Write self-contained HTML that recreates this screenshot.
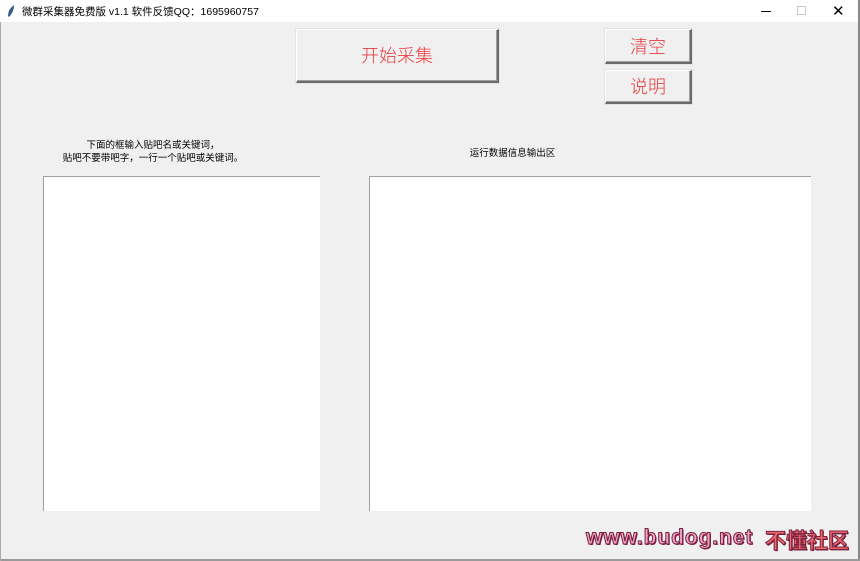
<!DOCTYPE html>
<html><head><meta charset="utf-8"><style>
*{margin:0;padding:0;box-sizing:border-box}
body{width:860px;height:561px;background:#f0f0f0;position:relative;overflow:hidden;font-family:"Liberation Sans","Noto Sans CJK SC",sans-serif}
.title{position:absolute;left:0;top:0;width:860px;height:22px;background:#fff;font-size:10.5px;color:#000}
.title span{position:absolute;left:22px;top:4px}
.btn{position:absolute;background:#f0f0f0;border-top:1px solid #fff;border-left:1px solid #fff;border-right:2px solid #6a6a6a;border-bottom:2px solid #6a6a6a;box-shadow:inset -1px -1px 0 #a0a0a0, 0 0 0 1px #e3e3e3;color:#e83a40;text-align:center;font-family:"Noto Sans CJK SC",sans-serif;font-weight:300}
.box{position:absolute;background:#fff;border-top:1px solid #a0a0a0;border-left:1px solid #a0a0a0}
.lbl{position:absolute;font-size:9.5px;color:#000;text-align:center;line-height:13px;font-family:"Noto Sans CJK SC",sans-serif}
.wm{position:absolute;font-weight:bold;color:#f1a6c6;-webkit-text-stroke:1px #7a2040;text-shadow:1px 1px 0 #7a2040;font-family:"Liberation Sans","Noto Sans CJK SC",sans-serif}
</style></head><body>
<div class="title">
<svg style="position:absolute;left:6px;top:4px" width="10" height="14"><path d="M8 1 Q2 5 2 12 L3 13 Q8 8 8 1Z" fill="#3a5a8a"/></svg>
<span>微群采集器免费版 v1.1 软件反馈QQ：1695960757</span>
<div style="position:absolute;left:761px;top:11px;width:10px;height:1px;background:#000"></div>
<div style="position:absolute;left:797px;top:6px;width:9px;height:9px;border:1px solid #c8c8c8"></div>
<div style="position:absolute;left:832px;top:2px;font-size:15px;color:#000">✕</div>
</div>
<div style="position:absolute;right:0;top:0;width:2px;height:561px;background:#888"></div>
<div style="position:absolute;left:0;bottom:0;width:860px;height:2px;background:#999"></div>
<div style="position:absolute;left:0;top:22px;width:1px;height:539px;background:#aaa"></div>
<div class="btn" style="left:296px;top:29px;width:203px;height:54px;font-size:18px;line-height:50px">开始采集</div>
<div class="btn" style="left:605px;top:29px;width:87px;height:35px;font-size:18px;line-height:32px">清空</div>
<div class="btn" style="left:605px;top:70px;width:87px;height:34px;font-size:18px;line-height:31px">说明</div>
<div class="lbl" style="left:43px;top:138px;width:220px">下面的框输入贴吧名或关键词，<br>贴吧不要带吧字，一行一个贴吧或关键词。</div>
<div class="lbl" style="left:369px;top:146px;width:287px">运行数据信息输出区</div>
<div class="box" style="left:43px;top:176px;width:277px;height:335px"></div>
<div class="box" style="left:369px;top:176px;width:442px;height:335px"></div>
<div class="wm" style="left:586px;top:526px;font-size:21px;letter-spacing:0.9px">www.budog.net</div>
<div class="wm" style="left:765px;top:525px;font-size:21px;color:#f06a6a">不懂社区</div>
</body></html>
